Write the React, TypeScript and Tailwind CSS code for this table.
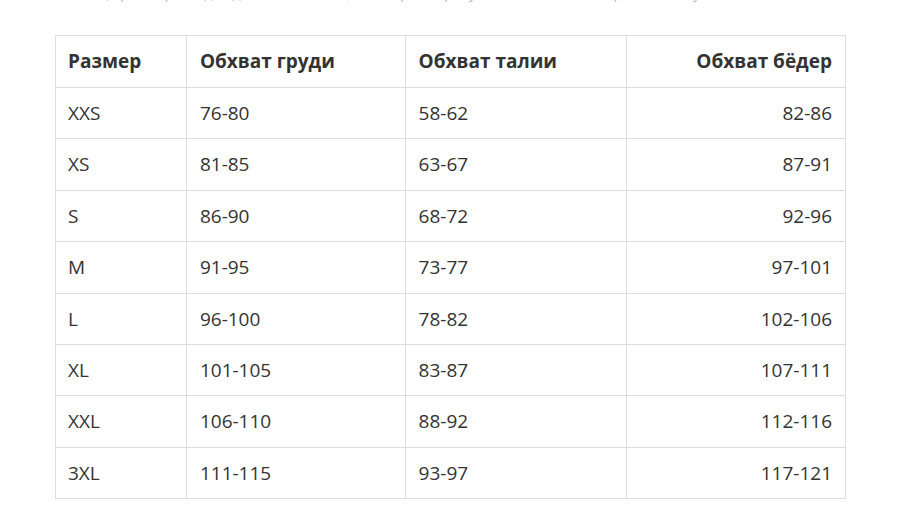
const ROWS = [
  ["XXS", "76-80", "58-62", "82-86"],
  ["XS", "81-85", "63-67", "87-91"],
  ["S", "86-90", "68-72", "92-96"],
  ["M", "91-95", "73-77", "97-101"],
  ["L", "96-100", "78-82", "102-106"],
  ["XL", "101-105", "83-87", "107-111"],
  ["XXL", "106-110", "88-92", "112-116"],
  ["3XL", "111-115", "93-97", "117-121"],
];

export default function App() {
  return (
    <div
      className="w-[900px] h-[532px] bg-white overflow-hidden text-[#333]"
      style={{ fontFamily: "'Open Sans', 'Liberation Sans', sans-serif" }}
    >
      {/* cut-off content above the table */}
      <div className="h-[35px] overflow-hidden">
        <div className="flex -mt-[19px] text-[15px] leading-[22px] text-[#bbb]">
          <div className="w-[348px] pl-[55px]">Таблица размеров одежды</div>
          <div className="border-l border-[#eee] pl-[32px]">Параметры указаны в сантиметрах, по телу</div>
        </div>
      </div>

      <table className="ml-[55px] w-[791px] border-collapse text-[19px]">
        <colgroup>
          <col className="w-[131px]" />
          <col className="w-[219px]" />
          <col className="w-[222px]" />
          <col className="w-[219px]" />
        </colgroup>
        <thead>
          <tr className="h-[52px]">
            <th className="border border-[#ddd] px-[12px] text-left font-bold">Размер</th>
            <th className="border border-[#ddd] px-[13px] text-left font-bold">Обхват груди</th>
            <th className="border border-[#ddd] px-[13px] text-left font-bold">Обхват талии</th>
            <th className="border border-[#ddd] px-[13px] text-right font-bold">Обхват бёдер</th>
          </tr>
        </thead>
        <tbody>
          {ROWS.map((r) => (
            <tr key={r[0]} className="h-[51.4px]">
              <td className="border border-[#ddd] px-[12px]">{r[0]}</td>
              <td className="border border-[#ddd] px-[13px]">{r[1]}</td>
              <td className="border border-[#ddd] px-[13px]">{r[2]}</td>
              <td className="border border-[#ddd] px-[13px] text-right">{r[3]}</td>
            </tr>
          ))}
        </tbody>
      </table>
    </div>
  );
}
